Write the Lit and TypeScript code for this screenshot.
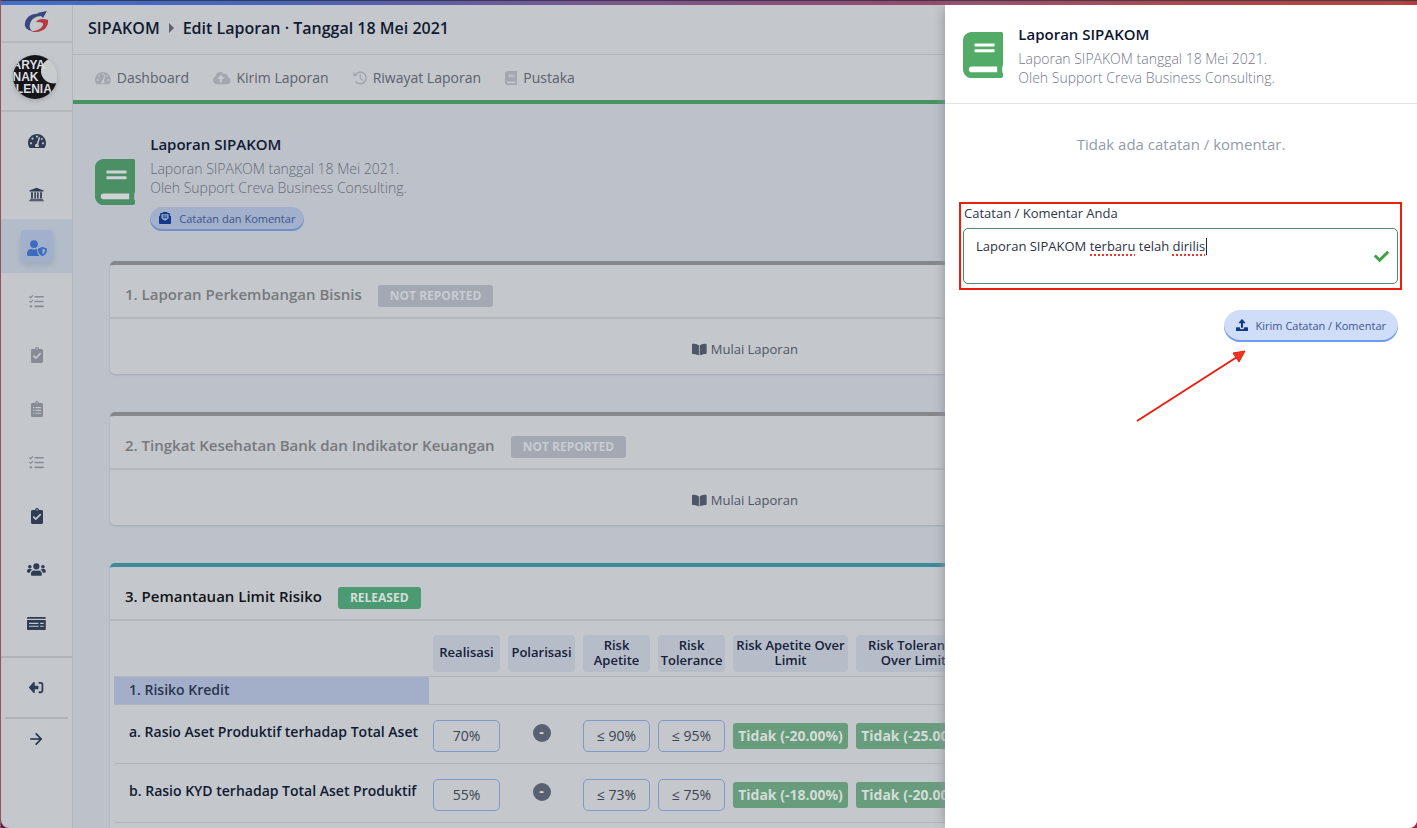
import { LitElement, html, svg, css, nothing } from "lit";
import { customElement, property } from "lit/decorators.js";
import { classMap } from "lit/directives/class-map.js";

const BOOK =
  "M448 360V24c0-13.3-10.7-24-24-24H96C43 0 0 43 0 96v320c0 53 43 96 96 96h328c13.3 0 24-10.7 24-24v-16c0-7.5-3.5-14.3-8.9-18.7-4.2-15.4-4.2-59.3 0-74.7 5.4-4.3 8.9-11.1 8.9-18.6zM128 134c0-3.3 2.7-6 6-6h212c3.3 0 6 2.7 6 6v20c0 3.3-2.7 6-6 6H134c-3.3 0-6-2.7-6-6v-20zm0 64c0-3.3 2.7-6 6-6h212c3.3 0 6 2.7 6 6v20c0 3.3-2.7 6-6 6H134c-3.3 0-6-2.7-6-6v-20zm253.4 250H96c-17.7 0-32-14.3-32-32 0-17.6 14.4-32 32-32h285.4c-1.9 17.1-1.9 46.9 0 64z";
const CLIPBOARD =
  "M336 64h-80c0-35.3-28.7-64-64-64s-64 28.7-64 64H48C21.5 64 0 85.5 0 112v352c0 26.5 21.5 48 48 48h288c26.5 0 48-21.5 48-48V112c0-26.5-21.5-48-48-48zM192 40c13.3 0 24 10.7 24 24s-10.7 24-24 24-24-10.7-24-24 10.7-24 24-24z";

const icons: Record<string, { box: string; body: unknown }> = {
  gauge: {
    box: "0 0 576 512",
    body: svg`<path fill="currentColor" d="M288 32C128.94 32 0 160.94 0 320c0 52.8 14.25 102.26 39.06 144.8 5.61 9.62 16.3 15.2 27.44 15.2h443c11.14 0 21.83-5.58 27.44-15.2C561.75 422.26 576 372.8 576 320c0-159.06-128.94-288-288-288z"/>
      <g fill="var(--hole)"><circle cx="288" cy="112" r="34"/><circle cx="144" cy="178" r="34"/><circle cx="96" cy="330" r="34"/><circle cx="480" cy="330" r="34"/><circle cx="442" cy="190" r="30"/>
      <path d="M346 128l44 14-62 216c20 26 24 56 14 90H234c-22-50 0-98 46-104z"/></g>`,
  },
  bank: {
    box: "0 0 512 512",
    body: svg`<path fill="currentColor" d="M256 24L16 116v36h480v-36zM72 176h60v208H72zM184 176h52v208h-52zM276 176h52v208h-52zM380 176h60v208h-60zM40 400h432v32H40zM12 448h488v40H12z"/>`,
  },
  userShield: {
    box: "0 0 640 512",
    body: svg`<g fill="currentColor"><circle cx="224" cy="128" r="124"/><path d="M314 288h-16c-46 22-102 22-148 0h-16C60 288 0 348 0 422v42c0 26 22 48 48 48h352c-46-40-76-110-72-210z"/><path d="M622 272l-114-46c-8-3-17-3-25 0l-114 46c-11 4-18 15-18 28 0 116 68 182 132 210 8 3 17 3 25 0 51-21 132-82 132-210 0-13-7-24-18-28zM496 460V276l88 36c-5 74-46 124-88 148z" fill-rule="evenodd"/></g>`,
  },
  tasks: {
    box: "0 0 512 512",
    body: svg`<g fill="none" stroke="currentColor"><path stroke-width="52" stroke-linecap="round" d="M208 90h276M208 256h276M208 422h276"/><path stroke-width="40" stroke-linecap="round" stroke-linejoin="round" d="M24 94l34 34 66-72M24 254l34 34 66-72"/></g><circle cx="66" cy="422" r="42" fill="currentColor"/>`,
  },
  clipCheck: {
    box: "0 0 384 512",
    body: svg`<path fill="currentColor" d="${CLIPBOARD}"/><path d="M88 290l66 66 142-142" fill="none" stroke="var(--hole)" stroke-width="54" stroke-linecap="round"/>`,
  },
  clipList: {
    box: "0 0 384 512",
    body: svg`<path fill="currentColor" d="${CLIPBOARD}"/><path d="M64 210h44M144 210h176M64 300h44M144 300h176M64 390h44M144 390h176" fill="none" stroke="var(--hole)" stroke-width="36"/>`,
  },
  users: {
    box: "0 0 640 512",
    body: svg`<g fill="currentColor"><circle cx="320" cy="150" r="104"/><circle cx="96" cy="160" r="60"/><circle cx="544" cy="160" r="60"/><path d="M394 286h-8c-42 20-90 20-132 0h-8c-64 0-112 50-112 112v26c0 26 20 44 44 44h284c24 0 44-18 44-44v-26c0-62-48-112-112-112zM176 262c-16-14-34-22-54-22H64c-35 0-64 29-64 64v32c0 18 14 32 32 32h66c8-46 38-84 78-106zM464 262c16-14 34-22 54-22h58c35 0 64 29 64 64v32c0 18-14 32-32 32h-66c-8-46-38-84-78-106z"/></g>`,
  },
  card: {
    box: "0 0 640 512",
    body: svg`<path fill="currentColor" d="M32 32h576c18 0 32 12 32 28v34H0V60c0-16 14-28 32-28zM0 138h640v312c0 16-14 30-32 30H32c-18 0-32-14-32-30z"/><path d="M70 250h320M70 350h330M450 250h120M450 350h120" stroke="var(--hole)" stroke-width="40" fill="none"/>`,
  },
  logout: {
    box: "0 0 512 512",
    body: svg`<path fill="currentColor" d="M196 88v108h104c14 0 24 10 24 24v72c0 14-10 24-24 24H196v108c0 20-24 30-40 16L6 276c-10-10-10-26 0-38L156 72c16-14 40-4 40 16z"/><path d="M330 94h78c28 0 50 22 50 50v224c0 28-22 50-50 50h-78" fill="none" stroke="currentColor" stroke-width="60"/>`,
  },
  arrow: {
    box: "0 0 448 512",
    body: svg`<path d="M30 256h370M226 70l186 186-186 186" fill="none" stroke="currentColor" stroke-width="58" stroke-linecap="round" stroke-linejoin="round"/>`,
  },
  cloud: {
    box: "0 0 640 512",
    body: svg`<path fill="currentColor" d="M537.6 226.6c4.1-10.7 6.4-22.4 6.4-34.6 0-53-43-96-96-96-19.7 0-38.1 6-53.3 16.2C367 64.2 315.3 32 256 32c-88.4 0-160 71.6-160 160 0 2.7.1 5.4.2 8.1C40.2 219.8 0 273.2 0 336c0 79.5 64.5 144 144 144h368c70.7 0 128-57.3 128-128 0-61.9-44-113.6-102.4-125.4zM393.4 288H328v112c0 8.8-7.2 16-16 16h-48c-8.8 0-16-7.2-16-16V288h-65.4c-14.3 0-21.4-17.2-11.3-27.3l105.4-105.4c6.2-6.2 16.4-6.2 22.6 0l105.4 105.4c10.1 10.1 2.9 27.3-11.3 27.3z"/>`,
  },
  history: {
    box: "0 0 512 512",
    body: svg`<path d="M96 128a212 212 0 1 1 8 262" fill="none" stroke="currentColor" stroke-width="58" stroke-linecap="round"/><path fill="currentColor" d="M8 40l156 148H32c-14 0-24-10-24-24z"/><path d="M264 146v126l76 58" fill="none" stroke="currentColor" stroke-width="52" stroke-linecap="round" stroke-linejoin="round"/>`,
  },
  book: { box: "0 0 448 512", body: svg`<path fill="currentColor" d="${BOOK}"/>` },
  bookOpen: {
    box: "0 0 576 512",
    body: svg`<path fill="currentColor" d="M542.22 32.05c-54.8 3.11-163.72 14.43-230.96 55.59-4.64 2.84-7.27 7.89-7.27 13.17v363.87c0 11.55 12.63 18.85 23.28 13.49 69.18-34.82 169.23-44.32 218.7-46.92 16.89-.89 30.02-14.43 30.02-30.66V62.75c.01-17.71-15.35-31.74-33.77-30.7zM264.73 87.64C197.5 46.48 88.58 35.17 33.78 32.05 15.36 31.01 0 45.04 0 62.75V400.6c0 16.24 13.13 29.78 30.02 30.66 49.49 2.6 149.59 12.11 218.77 46.95 10.62 5.35 23.21-1.94 23.21-13.46V100.63c0-5.29-2.62-10.14-7.27-12.99z"/>`,
  },
  mail: {
    box: "0 0 512 512",
    body: svg`<path fill="currentColor" fill-rule="evenodd" d="M176 0h160l32 44h56c22 0 40 18 40 40v60l48 40v280c0 26-22 48-48 48H48c-26 0-48-22-48-48V184l48-40V84c0-22 18-40 40-40h56zM104 100v180l152 96 152-96V100z"/><path d="M156 168h200M156 246h200" stroke="currentColor" stroke-width="44"/>`,
  },
  upload: {
    box: "0 0 512 512",
    body: svg`<path fill="currentColor" d="M212 352V176h-80c-16 0-24-18-12-30L242 14c8-8 20-8 28 0l122 132c12 12 4 30-12 30h-80v176c0 14-10 24-24 24h-40c-14 0-24-10-24-24z"/><path fill="currentColor" d="M0 376c0-14 10-24 24-24h140v24c0 38 28 62 62 62h60c34 0 62-24 62-62v-24h140c14 0 24 10 24 24v112c0 14-10 24-24 24H24c-14 0-24-10-24-24z"/>`,
  },
  check: {
    box: "0 0 512 512",
    body: svg`<path fill="currentColor" d="M173.898 439.404l-166.4-166.4c-9.997-9.997-9.997-26.206 0-36.204l36.203-36.204c9.997-9.998 26.207-9.998 36.204 0L192 312.69 432.095 72.596c9.997-9.997 26.207-9.997 36.204 0l36.203 36.204c9.997 9.997 9.997 26.206 0 36.204l-294.4 294.401c-9.998 9.997-26.207 9.997-36.204-.001z"/>`,
  },
};

@customElement("ui-icon")
class UiIcon extends LitElement {
  @property() name = "";
  @property({ type: Number }) size = 16;

  static styles = css`
    :host {
      display: inline-flex;
      flex: none;
    }
    svg {
      display: block;
    }
  `;

  render() {
    const icon = icons[this.name];
    if (!icon) return nothing;
    const [, , w, h] = icon.box.split(" ").map(Number);
    return html`<svg
      viewBox=${icon.box}
      width=${(this.size * w) / h}
      height=${this.size}
      aria-hidden="true"
    >
      ${icon.body}
    </svg>`;
  }
}

@customElement("report-heading")
class ReportHeading extends LitElement {
  @property({ type: Boolean, reflect: true }) bright = false;

  static styles = css`
    :host {
      display: flex;
      align-items: center;
      gap: 15px;
      color: #4b8f64;
      --title: #101b33;
      --sub: #656b77;
      --hole: #d0d3d6;
    }
    :host([bright]) {
      color: #53ab68;
      --title: #0b1530;
      --sub: #74788a;
      --hole: #ffffff;
    }
    .cover {
      margin-top: 2px;
      background: linear-gradient(var(--hole), var(--hole)) center / 30px 36px no-repeat;
    }
    h2 {
      margin: 0 0 1px;
      font-size: 15px;
      font-weight: 600;
      line-height: 28px;
      color: var(--title);
    }
    p {
      margin: 0;
      font-size: 14px;
      font-weight: 300;
      line-height: 19px;
      color: var(--sub);
    }
  `;

  render() {
    return html`
      <ui-icon class="cover" name="book" .size=${46}></ui-icon>
      <div>
        <h2>Laporan SIPAKOM</h2>
        <p>Laporan SIPAKOM tanggal 18 Mei 2021.</p>
        <p>Oleh Support Creva Business Consulting.</p>
        <slot></slot>
      </div>
    `;
  }
}

const nav = [
  { icon: "gauge", label: "Dashboard", size: 16 },
  { icon: "bank", label: "Bank", size: 15 },
  { icon: "userShield", label: "Kepatuhan", size: 16, active: true },
  { icon: "tasks", label: "Tugas", size: 15, dim: true },
  { icon: "clipCheck", label: "Penilaian", size: 16, dim: true },
  { icon: "clipList", label: "Daftar", size: 16, dim: true },
  { icon: "tasks", label: "Rencana", size: 15, dim: true },
  { icon: "clipCheck", label: "Persetujuan", size: 16 },
  { icon: "users", label: "Pengguna", size: 15 },
  { icon: "card", label: "Tagihan", size: 15 },
];

const tabs = [
  { icon: "gauge", label: "Dashboard", size: 14 },
  { icon: "cloud", label: "Kirim Laporan", size: 14 },
  { icon: "history", label: "Riwayat Laporan", size: 14 },
  { icon: "book", label: "Pustaka", size: 14 },
];

const columns = [
  "Realisasi",
  "Polarisasi",
  "Risk Apetite",
  "Risk Tolerance",
  "Risk Apetite Over Limit",
  "Risk Tolerance Over Limit",
];

const rows = [
  {
    label: "a. Rasio Aset Produktif terhadap Total Aset",
    real: "70%",
    apetite: "≤ 90%",
    tolerance: "≤ 95%",
    over: ["Tidak (-20.00%)", "Tidak (-25.00%)"],
  },
  {
    label: "b. Rasio KYD terhadap Total Aset Produktif",
    real: "55%",
    apetite: "≤ 73%",
    tolerance: "≤ 75%",
    over: ["Tidak (-18.00%)", "Tidak (-20.00%)"],
  },
];

@customElement("app-root")
class AppRoot extends LitElement {
  static styles = css`
    :host {
      display: flex;
      flex-direction: column;
      position: relative;
      box-sizing: border-box;
      height: 100vh;
      overflow: hidden;
      border-left: 1px solid #96525a;
      background: linear-gradient(90deg, #55204f, #b02438);
      font-family: "Open Sans", "Noto Sans", sans-serif;
      font-size: 14px;
      color: #101b33;
    }
    * {
      box-sizing: border-box;
    }
    a {
      color: inherit;
      text-decoration: none;
    }
    .topline {
      flex: none;
      height: 5px;
      border-top: 1px solid #3a3b4a;
      background: linear-gradient(90deg, #3f6fd0, #4664bd 20%, #7b5590 42%, #99486a 66%, #b83a3c 85%, #bd3832);
    }
    .shell {
      flex: 1;
      min-height: 0;
      display: flex;
    }

    .side {
      flex: none;
      width: 72px;
      display: flex;
      flex-direction: column;
      background: #c4c7cb;
      border-right: 1px solid #b3b7bd;
      border-bottom-left-radius: 8px;
      --hole: #c4c7cb;
    }
    .logo,
    .avatar {
      display: flex;
      justify-content: center;
      align-items: center;
      border-bottom: 2px solid #b5b8bc;
    }
    .logo {
      height: 38px;
      padding: 0 2px 2px 0;
    }
    .avatar {
      height: 69px;
      padding-right: 4px;
    }
    .face {
      display: flex;
      flex-direction: column;
      justify-content: center;
      width: 44px;
      height: 44px;
      overflow: hidden;
      border-radius: 50%;
      background: radial-gradient(circle at 92% 36%, #c9cccf 12px, #14161a 13px);
      color: #dddfe0;
      font-family: "Liberation Sans", sans-serif;
      font-size: 12px;
      font-weight: 700;
      line-height: 12px;
      white-space: nowrap;
      box-shadow: 0 2px 5px #a2a6ab;
    }
    .menu {
      display: grid;
      grid-auto-rows: 1fr;
      height: 546px;
      padding-bottom: 8px;
      border-bottom: 2px solid #b0b3b7;
    }
    .item {
      display: flex;
      justify-content: center;
      align-items: center;
      color: #303c53;
    }
    .item.dim {
      color: #868b95;
    }
    .item.active {
      background: #b3bdca;
      color: #3b6cc0;
    }
    .tile {
      display: flex;
      justify-content: center;
      align-items: center;
      width: 32px;
      height: 32px;
      padding-top: 4px;
      border-radius: 4px;
    }
    .active .tile {
      background: #a3b0cb;
      box-shadow: 0 3px 6px #9ca8b9;
    }
    .exit {
      display: flex;
      justify-content: center;
      align-items: center;
      height: 61px;
      margin: 0 4px;
      border-bottom: 2px solid #b0b3b7;
      color: #303c53;
    }
    .expand {
      height: 40px;
      padding: 0;
      border: 0;
      background: none;
      display: flex;
      justify-content: center;
      align-items: center;
      color: #1f2d4a;
    }

    main {
      flex: 1;
      min-width: 0;
      overflow: hidden;
      background: #bcc1ca;
      border-bottom-right-radius: 8px;
    }
    .crumbs {
      display: flex;
      align-items: center;
      gap: 9px;
      height: 50px;
      padding: 0 15px 4px;
      background: #c4c7cb;
      border-bottom: 1px solid #b1b4b8;
      font-size: 16px;
      font-weight: 600;
      white-space: nowrap;
    }
    .crumbs h1 {
      margin: 0;
      font: inherit;
    }
    .tabs {
      display: flex;
      gap: 24px;
      height: 49px;
      padding: 0 22px;
      background: #c4c7cb;
      border-bottom: 4px solid #46935f;
      --hole: #c4c7cb;
    }
    .tab {
      display: flex;
      align-items: center;
      gap: 6px;
      font-size: 14px;
      color: #5b616f;
      white-space: nowrap;
    }
    .tab ui-icon {
      color: #a3a7b0;
    }
    .content {
      padding: 26px 37px;
    }
    .report {
      margin: 0 0 30px -15px;
    }

    .pill {
      display: inline-flex;
      align-items: center;
      border: 0;
      border-radius: 16px;
      font-family: inherit;
      white-space: nowrap;
    }
    .pill.notes {
      height: 24px;
      margin-top: 10px;
      padding: 0 9px 2px;
      gap: 8px;
      background: #a3b0cb;
      box-shadow: inset 0 -2px 0 #6f8fcb;
      color: #3a558c;
      font-size: 11px;
    }
    .pill.send {
      height: 32px;
      padding: 0 12px 2px;
      gap: 8px;
      background: #cfddf9;
      box-shadow: inset 0 -2px 0 #6d9cf0;
      color: #41568f;
      font-size: 11px;
    }
    .pill ui-icon {
      color: #12388a;
    }

    .card {
      margin-bottom: 38px;
      border-radius: 5px;
      background: #c4c7cb;
      border-top: 4px solid #84888d;
      box-shadow: 0 1px 2px #a5a9af;
    }
    .card.open {
      border-top-color: #3d8a99;
    }
    .card header {
      display: flex;
      align-items: center;
      gap: 16px;
      height: 54px;
      padding: 10px 15px 0;
      border-bottom: 2px solid #b4b7bb;
    }
    .card h3 {
      margin: 0;
      padding-bottom: 4px;
      font-size: 15px;
      font-weight: 600;
      color: #76797e;
    }
    .card.open h3 {
      color: #101318;
    }
    .badge {
      height: 22px;
      padding: 0 12px;
      border-radius: 3px;
      background: #a3a8b3;
      color: #c8ccd2;
      font-size: 12px;
      font-weight: 700;
      line-height: 22px;
    }
    .open .badge {
      background: #4b9a71;
      color: #d3dfd8;
    }
    .start {
      display: flex;
      justify-content: center;
      align-items: center;
      gap: 4px;
      height: 55px;
      padding-top: 5px;
      color: #4e5567;
      font-size: 13px;
    }

    .tablewrap {
      padding: 11px 4px;
    }
    table {
      width: 100%;
      table-layout: fixed;
      border-collapse: collapse;
    }
    .wide {
      width: 315px;
    }
    .narrow {
      width: 75px;
    }
    .over {
      width: 123px;
    }
    tr {
      border-bottom: 1px solid #b2b5ba;
    }
    th,
    td {
      padding: 0 4px;
      font-weight: 400;
      text-align: center;
    }
    thead th {
      padding: 3px 4px 4px;
    }
    .head {
      display: flex;
      align-items: center;
      justify-content: center;
      height: 37px;
      padding-bottom: 2px;
      border-radius: 4px;
      background: #b6bdc9;
      color: #16213a;
      font-size: 13px;
      font-weight: 600;
      line-height: 15px;
    }
    .group th {
      height: 28px;
      padding: 0 15px 3px;
      background: #a3afc8;
      color: #2a3550;
      font-size: 14px;
      font-weight: 600;
      text-align: left;
    }
    .group td {
      padding: 0;
    }
    .line th {
      height: 59px;
      padding: 0 0 6px 15px;
      font-size: 14px;
      font-weight: 600;
      text-align: left;
      white-space: nowrap;
    }
    .value {
      display: block;
      height: 32px;
      border: 1px solid #7d99cd;
      border-radius: 5px;
      color: #3c4352;
      font-size: 14px;
      line-height: 30px;
    }
    .minus {
      display: block;
      width: 18px;
      height: 18px;
      margin: 0 auto 6px;
      border-radius: 50%;
      background: #5a6070;
      color: #d5d8dc;
      font-weight: 700;
      line-height: 16px;
    }
    .line td {
      padding-top: 3px;
    }
    .ok {
      display: block;
      height: 26px;
      border-radius: 3px;
      background: #679d7c;
      color: #d4dcd8;
      font-size: 14px;
      font-weight: 700;
      line-height: 25px;
      white-space: nowrap;
    }

    .drawer {
      position: absolute;
      top: 5px;
      right: 0;
      bottom: 0;
      width: 33.33%;
      background: #ffffff;
      border-bottom-right-radius: 8px;
      box-shadow: -4px 0 12px -4px #8b919b;
    }
    .drawer-head {
      padding: 15px 18px 16px;
      border-bottom: 1px solid #e2e3e6;
    }
    .empty {
      margin: 0;
      padding: 30px 0 51px;
      color: #959ba9;
      font-size: 15px;
      line-height: 20px;
      text-align: center;
    }
    form {
      display: flex;
      flex-direction: column;
      gap: 20px;
      padding: 0 15px 0 14px;
    }
    .marked {
      display: flex;
      flex-direction: column;
      gap: 5px;
      margin-top: -3px;
      padding: 0 2px 4px 2px;
      border: 2px solid #ee1c0c;
    }
    label {
      padding-left: 1px;
      color: #2f3648;
      font-size: 13px;
      line-height: 19px;
    }
    .field {
      position: relative;
      display: flex;
    }
    textarea {
      flex: 1;
      height: 56px;
      padding: 8px 40px 8px 12px;
      border: 1px solid #4d8a69;
      border-radius: 5px;
      background: none;
      color: #2c3243;
      font-family: inherit;
      font-size: 13px;
      line-height: 18px;
      resize: none;
      outline: none;
    }
    .proof {
      position: absolute;
      left: 13px;
      top: 8px;
      pointer-events: none;
    }
    .valid {
      position: absolute;
      right: 9px;
      top: 21px;
      color: #40a044;
    }
    .pill.send {
      align-self: flex-end;
      margin-right: 4px;
    }
    .pointer {
      position: absolute;
      right: 170px;
      top: 344px;
      pointer-events: none;
    }
  `;

  private card(title: string, status: string, body: unknown, open = false) {
    return html`<section class=${classMap({ card: true, open })}>
      <header>
        <h3>${title}</h3>
        <span class="badge">${status}</span>
      </header>
      ${body}
    </section>`;
  }

  private start() {
    return html`<a class="start" href="#">
      <ui-icon name="bookOpen" .size=${13}></ui-icon>Mulai Laporan
    </a>`;
  }

  private limits() {
    return html`<div class="tablewrap">
      <table>
        <colgroup>
          <col class="wide" />
          ${columns.map((_, i) => html`<col class=${i < 4 ? "narrow" : "over"} />`)}
          <col />
        </colgroup>
        <thead>
          <tr>
            <td></td>
            ${columns.map((c) => html`<th scope="col"><span class="head">${c}</span></th>`)}
            <td></td>
          </tr>
        </thead>
        <tbody>
          <tr class="group">
            <th scope="rowgroup">1. Risiko Kredit</th>
            <td colspan="7"></td>
          </tr>
          ${rows.map(
            (r) => html`<tr class="line">
              <th scope="row">${r.label}</th>
              <td><span class="value">${r.real}</span></td>
              <td><span class="minus">-</span></td>
              <td><span class="value">${r.apetite}</span></td>
              <td><span class="value">${r.tolerance}</span></td>
              ${r.over.map((o) => html`<td><span class="ok">${o}</span></td>`)}
              <td></td>
            </tr>`,
          )}
        </tbody>
      </table>
    </div>`;
  }

  render() {
    return html`
      <div class="topline"></div>
      <div class="shell">
        <nav class="side" aria-label="Menu utama">
          <a class="logo" href="#" aria-label="SIPAKOM">
            <svg width="26" height="24" viewBox="0 0 26 24" aria-hidden="true">
              <path fill="#38477f" d="M14 3L24 1l-4 7-2-2C13 6 8 9 7 14c-1 3 0 5 2 7-5-1-8-4-7-8C3 7 9 3 16 4z" />
              <path fill="#b8393f" d="M13 12c2-3 7-4 12-2 1 7-5 12-12 12-2 0-3 0-5-1 6 0 10-2 12-6 1-3-4-3-7-3z" />
            </svg>
          </a>
          <a class="avatar" href="#" aria-label="Profil">
            <span class="face"><span>ARYA</span><span>NAK</span><span>ILENIA</span></span>
          </a>
          <div class="menu">
            ${nav.map(
              (n) => html`<a
                class=${classMap({ item: true, active: !!n.active, dim: !!n.dim })}
                href="#"
                aria-label=${n.label}
                ><span class="tile"><ui-icon name=${n.icon} .size=${n.size}></ui-icon></span
              ></a>`,
            )}
          </div>
          <a class="exit" href="#" aria-label="Keluar"><ui-icon name="logout" .size=${15}></ui-icon></a>
          <button class="expand" type="button" aria-label="Buka menu">
            <ui-icon name="arrow" .size=${14}></ui-icon>
          </button>
        </nav>
        <main>
          <div class="crumbs">
            <a href="#">SIPAKOM</a>
            <svg width="5" height="10" viewBox="0 0 5 10" aria-hidden="true"><path d="M0 0l5 5-5 5z" fill="#5b616f" /></svg>
            <h1>Edit Laporan · Tanggal 18 Mei 2021</h1>
          </div>
          <nav class="tabs" aria-label="Laporan">
            ${tabs.map(
              (t) => html`<a class="tab" href="#"><ui-icon name=${t.icon} .size=${t.size}></ui-icon>${t.label}</a>`,
            )}
          </nav>
          <div class="content">
            <report-heading class="report">
              <button class="pill notes" type="button">
                <ui-icon name="mail" .size=${12}></ui-icon>Catatan dan Komentar
              </button>
            </report-heading>
            ${this.card("1. Laporan Perkembangan Bisnis", "NOT REPORTED", this.start())}
            ${this.card("2. Tingkat Kesehatan Bank dan Indikator Keuangan", "NOT REPORTED", this.start())}
            ${this.card("3. Pemantauan Limit Risiko", "RELEASED", this.limits(), true)}
          </div>
        </main>
      </div>

      <aside class="drawer">
        <div class="drawer-head"><report-heading bright></report-heading></div>
        <p class="empty">Tidak ada catatan / komentar.</p>
        <form>
          <div class="marked">
            <label for="note">Catatan / Komentar Anda</label>
            <div class="field">
              <textarea id="note" .value=${"Laporan SIPAKOM terbaru telah dirilis"}></textarea>
              <svg class="proof" width="240" height="22" viewBox="0 0 240 22" aria-hidden="true">
                <path
                  d="M114 19h45M196 19h33"
                  stroke="#e8382c"
                  stroke-width="2"
                  stroke-dasharray="2 2"
                />
                <path d="M230.5 2v17" stroke="#20283a" />
              </svg>
              <ui-icon class="valid" name="check" .size=${15}></ui-icon>
            </div>
          </div>
          <button class="pill send" type="button">
            <ui-icon name="upload" .size=${12}></ui-icon>Kirim Catatan / Komentar
          </button>
        </form>
        <svg class="pointer" width="112" height="76" viewBox="0 0 112 76" aria-hidden="true">
          <path d="M2 72L102 8" stroke="#ee1c0c" stroke-width="2" />
          <path d="M110 2L104 13 98 4z" fill="#ee3422" stroke="#ee1c0c" />
        </svg>
      </aside>
    `;
  }
}
